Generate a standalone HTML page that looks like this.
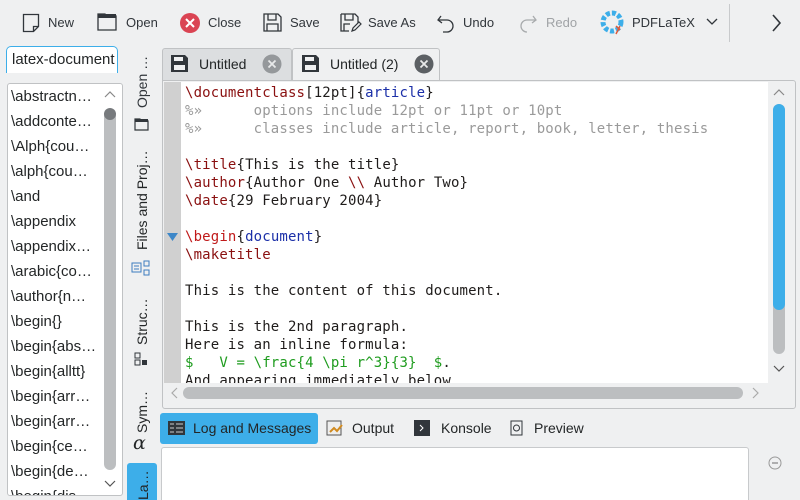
<!DOCTYPE html>
<html><head><meta charset="utf-8"><style>
*{box-sizing:border-box;margin:0;padding:0}
html,body{width:800px;height:500px;overflow:hidden}
body{background:#eff0f1;font-family:"Liberation Sans","DejaVu Sans",sans-serif;font-size:14px;color:#232627;position:relative}
.a{position:absolute}
.tb{top:0;height:45px;left:0;width:800px}
.tbi{position:absolute;top:15px;font-size:13px;color:#31363b}
.list div{height:25px;line-height:25px;padding-left:3px;font-size:15px;white-space:nowrap}
.code{font-family:"DejaVu Sans Mono",monospace;font-size:14px;letter-spacing:.15px;line-height:18px;white-space:pre;color:#1f1c1b}
.k{color:#8a1010}.b{color:#1b2fa8}.c{color:#9a9a9a}.g{color:#1f9c1f}.r{color:#c01a1a}
.vt{writing-mode:vertical-rl;transform:rotate(180deg);font-size:14px;position:absolute;left:134px}
</style></head><body>
<div class="a tb">
 <svg class="a" style="left:22px;top:13px" width="18" height="20"><path d="M1.5 1.5h15v12l-5 5h-10z M11.5 18.5v-5h5" fill="none" stroke="#31363b" stroke-width="1.3"/></svg>
 <span class="tbi" style="left:48px">New</span>
 <svg class="a" style="left:97px;top:13px" width="20" height="18"><path d="M1 1h7l2 2h9v14H1z" fill="none" stroke="#31363b" stroke-width="1.3"/><rect x="1" y="1" width="18" height="4" fill="#31363b"/></svg>
 <span class="tbi" style="left:126px">Open</span>
 <svg class="a" style="left:180px;top:13px" width="20" height="20"><circle cx="10" cy="10" r="10" fill="#da4453"/><path d="M6 6l8 8M14 6l-8 8" stroke="#fff" stroke-width="2"/></svg>
 <span class="tbi" style="left:208px">Close</span>
 <svg class="a" style="left:263px;top:13px" width="19" height="19"><path d="M1 1h14l3 3v14H1z M5 1v6h8V1 M4 18v-7h11v7" fill="none" stroke="#31363b" stroke-width="1.3"/></svg>
 <span class="tbi" style="left:290px">Save</span>
 <svg class="a" style="left:340px;top:13px" width="22" height="20"><path d="M1 1h14l3 3v6 M9 18H1V1 M5 1v6h8V1 M4 18v-7h6" fill="none" stroke="#31363b" stroke-width="1.3"/><path d="M12 18l1-3 6-6 2 2-6 6z" fill="none" stroke="#31363b" stroke-width="1.2"/></svg>
 <span class="tbi" style="left:368px">Save As</span>
 <svg class="a" style="left:437px;top:13px" width="18" height="20"><path d="M4 3L1 7l4 3 M1 7h9a6 6 0 0 1 0 12H6" fill="none" stroke="#31363b" stroke-width="1.3"/></svg>
 <span class="tbi" style="left:463px">Undo</span>
 <svg class="a" style="left:519px;top:13px" width="18" height="20"><path d="M14 3l3 4-4 3 M17 7H8a6 6 0 0 0 0 12" fill="none" stroke="#a8abad" stroke-width="1.3"/></svg>
 <span class="tbi" style="left:546px;color:#a0a3a6">Redo</span>
 <svg class="a" style="left:600px;top:10px" width="26" height="26"><circle cx="12" cy="12" r="9" fill="none" stroke="#3daee9" stroke-width="5" stroke-dasharray="4 2"/><path d="M16 16l4 4M20 16l-4 8" stroke="#e05a3a" stroke-width="1.5"/></svg>
 <span class="tbi" style="left:632px">PDFLaTeX</span>
 <svg class="a" style="left:706px;top:18px" width="12" height="8"><path d="M1 1l5 5 5-5" fill="none" stroke="#31363b" stroke-width="1.3"/></svg>
 <div class="a" style="left:729px;top:4px;width:1px;height:38px;background:#c8cacc"></div>
 <svg class="a" style="left:772px;top:14px" width="10" height="18"><path d="M1 1l7 8-7 8" fill="none" stroke="#31363b" stroke-width="1.6"/></svg>
</div>
<div class="a" style="left:6px;top:46px;width:112px;height:27px;border:1px solid #3daee9;border-top-left-radius:5px;border-top-right-radius:5px;border-bottom:none;background:#fff"></div>
<div class="a" style="left:12px;top:51px;font-size:15px">latex-document</div>
<div class="a list" style="left:7px;top:83px;width:116px;height:413px;background:#fff;border:1px solid #c0c2c4;border-radius:3px;overflow:hidden">
 <div>\abstractn…</div><div>\addconte…</div><div>\Alph{cou…</div><div>\alph{cou…</div><div>\and</div><div>\appendix</div><div>\appendix…</div><div>\arabic{co…</div><div>\author{n…</div><div>\begin{}</div><div>\begin{abs…</div><div>\begin{alltt}</div><div>\begin{arr…</div><div>\begin{arr…</div><div>\begin{ce…</div><div>\begin{de…</div><div>\begin{dis…</div>
</div>
<div class="a" style="left:104px;top:110px;width:12px;height:360px;background:#bcbec0;border-radius:6px"></div>
<div class="a" style="left:104px;top:108px;width:12px;height:12px;background:#777a7d;border-radius:6px"></div>
<svg class="a" style="left:104px;top:90px" width="12" height="8"><path d="M1 7l5-5 5 5" fill="none" stroke="#888" stroke-width="1.2"/></svg>
<svg class="a" style="left:104px;top:480px" width="12" height="8"><path d="M1 1l5 5 5-5" fill="none" stroke="#555" stroke-width="1.2"/></svg>
<div class="vt" style="top:52px;height:56px;color:#31363b">Open …</div>
<svg class="a" style="left:134px;top:118px" width="15" height="13"><path d="M1 1h5l1 2h7v9H1z" fill="none" stroke="#31363b" stroke-width="1.2"/><rect x="1" y="1" width="13" height="3" fill="#31363b"/></svg>
<div class="vt" style="top:148px;height:102px">Files and Proj…</div>
<svg class="a" style="left:131px;top:260px" width="20" height="16"><rect x="1" y="3" width="9" height="9" fill="none" stroke="#3d7dc0"/><rect x="13" y="1" width="5" height="5" fill="none" stroke="#3d7dc0"/><rect x="13" y="10" width="5" height="5" fill="none" stroke="#3d7dc0"/><path d="M3 6h5M3 9h5" stroke="#3d7dc0"/></svg>
<div class="vt" style="top:289px;height:56px">Struc…</div>
<svg class="a" style="left:134px;top:352px" width="14" height="14"><rect x="1" y="1" width="5" height="5" fill="none" stroke="#31363b"/><rect x="8" y="8" width="5" height="5" fill="#31363b"/><rect x="1" y="8" width="5" height="5" fill="none" stroke="#31363b"/></svg>
<div class="vt" style="top:385px;height:48px">Sym…</div>
<div class="a" style="left:133px;top:432px;font-family:'DejaVu Serif',serif;font-style:italic;font-size:19px">α</div>
<div class="a" style="left:127px;top:463px;width:30px;height:40px;background:#3daee9;border-radius:3px"></div>
<div class="vt" style="top:470px;height:30px;left:135px">La…</div>
<div class="a" style="left:162px;top:48px;width:130px;height:33px;background:#dcdee0;border:1px solid #c0c2c4;border-bottom:none;border-radius:3px 3px 0 0"></div>
<div class="a" style="left:292px;top:48px;width:148px;height:34px;background:#eff0f1;border:1px solid #c0c2c4;border-bottom:none;border-radius:3px 3px 0 0"></div>
<svg class="a" style="left:171px;top:55px" width="17" height="17"><path d="M0 0h14l3 3v14H0z" fill="#31363b"/><rect x="3" y="2" width="9" height="4" fill="#eff0f1"/><rect x="3" y="10" width="11" height="5" fill="#eff0f1"/></svg>
<span class="a" style="left:199px;top:56px;font-size:14px">Untitled</span>
<svg class="a" style="left:262px;top:54px" width="20" height="20"><circle cx="10" cy="10" r="9.5" fill="#95989b"/><path d="M6.5 6.5l7 7M13.5 6.5l-7 7" stroke="#e8e9ea" stroke-width="1.8"/></svg>
<svg class="a" style="left:302px;top:55px" width="17" height="17"><path d="M0 0h14l3 3v14H0z" fill="#31363b"/><rect x="3" y="2" width="9" height="4" fill="#eff0f1"/><rect x="3" y="10" width="11" height="5" fill="#eff0f1"/></svg>
<span class="a" style="left:330px;top:56px;font-size:14px">Untitled (2)</span>
<svg class="a" style="left:414px;top:54px" width="20" height="20"><circle cx="10" cy="10" r="9.5" fill="#5c6064"/><path d="M6.5 6.5l7 7M13.5 6.5l-7 7" stroke="#e8e9ea" stroke-width="1.8"/></svg>
<div class="a" style="left:162px;top:80px;width:634px;height:329px;border:1px solid #c0c2c4;background:#eff0f1;border-radius:0 3px 3px 3px"></div>
<div class="a" style="left:164px;top:82px;width:604px;height:301px;background:#fff;overflow:hidden">
 <div class="a" style="left:0;top:0;width:17px;height:301px;background:#d0d0d0"></div>
 <svg class="a" style="left:3px;top:151px" width="11" height="8"><path d="M0 0h11L5.5 8z" fill="#3d87c8"/></svg>
 <div class="a code" style="left:21px;top:2px"><span class="k">\documentclass</span>[12pt]{<span class="b">article</span>}
<span class="c">%»      options include 12pt or 11pt or 10pt</span>
<span class="c">%»      classes include article, report, book, letter, thesis</span>

<span class="k">\title</span>{This is the title}
<span class="k">\author</span>{Author One <span class="k">\\</span> Author Two}
<span class="k">\date</span>{29 February 2004}

<span class="r">\begin</span>{<span class="b">document</span>}
<span class="k">\maketitle</span>

This is the content of this document.

This is the 2nd paragraph.
Here is an inline formula:
<span class="g">$   V = \frac{4 \pi r^3}{3}  $</span>.
And appearing immediately below</div>
</div>
<svg class="a" style="left:773px;top:88px" width="12" height="8"><path d="M1 7l5-5 5 5" fill="none" stroke="#888" stroke-width="1.2"/></svg>
<div class="a" style="left:773px;top:104px;width:12px;height:250px;background:#bcbec0;border-radius:6px"></div>
<div class="a" style="left:773px;top:104px;width:12px;height:206px;background:#3daee9;border-radius:6px"></div>
<svg class="a" style="left:773px;top:365px" width="12" height="8"><path d="M1 1l5 5 5-5" fill="none" stroke="#555" stroke-width="1.2"/></svg>
<svg class="a" style="left:170px;top:387px" width="8" height="12"><path d="M7 1L2 6l5 5" fill="none" stroke="#aaa" stroke-width="1.2"/></svg>
<div class="a" style="left:183px;top:387px;width:560px;height:12px;background:#bcbec0;border-radius:6px"></div>
<svg class="a" style="left:752px;top:387px" width="8" height="12"><path d="M1 1l5 5-5 5" fill="none" stroke="#aaa" stroke-width="1.2"/></svg>
<div class="a" style="left:160px;top:413px;width:158px;height:31px;background:#3daee9;border-radius:3px"></div>
<svg class="a" style="left:168px;top:421px" width="17" height="14"><rect width="17" height="14" fill="#31363b"/><path d="M2 3h4M8 3h7M2 7h4M8 7h7M2 11h4M8 11h7" stroke="#ccc"/></svg>
<span class="a" style="left:193px;top:420px;font-size:14px">Log and Messages</span>
<svg class="a" style="left:326px;top:420px" width="18" height="16"><rect x="1" y="1" width="14" height="14" fill="#eee" stroke="#555"/><path d="M4 12l4-4 3 3 5-6" stroke="#d08a20" stroke-width="2" fill="none"/></svg>
<span class="a" style="left:352px;top:420px;font-size:14px">Output</span>
<svg class="a" style="left:414px;top:420px" width="16" height="16"><rect width="16" height="16" fill="#31363b"/><path d="M6 5l3 3-3 3" stroke="#fff" fill="none"/></svg>
<span class="a" style="left:441px;top:420px;font-size:14px">Konsole</span>
<svg class="a" style="left:510px;top:420px" width="14" height="16"><rect x="1" y="1" width="11" height="14" fill="none" stroke="#31363b"/><circle cx="6.5" cy="8" r="3" fill="none" stroke="#31363b"/></svg>
<span class="a" style="left:534px;top:420px;font-size:14px">Preview</span>
<div class="a" style="left:161px;top:447px;width:588px;height:60px;background:#fff;border:1px solid #c8cacc;border-radius:3px"></div>
<svg class="a" style="left:768px;top:456px" width="14" height="14"><circle cx="7" cy="7" r="6" fill="none" stroke="#999"/><path d="M4 7h6" stroke="#999" stroke-width="1.5"/></svg>
</body></html>
